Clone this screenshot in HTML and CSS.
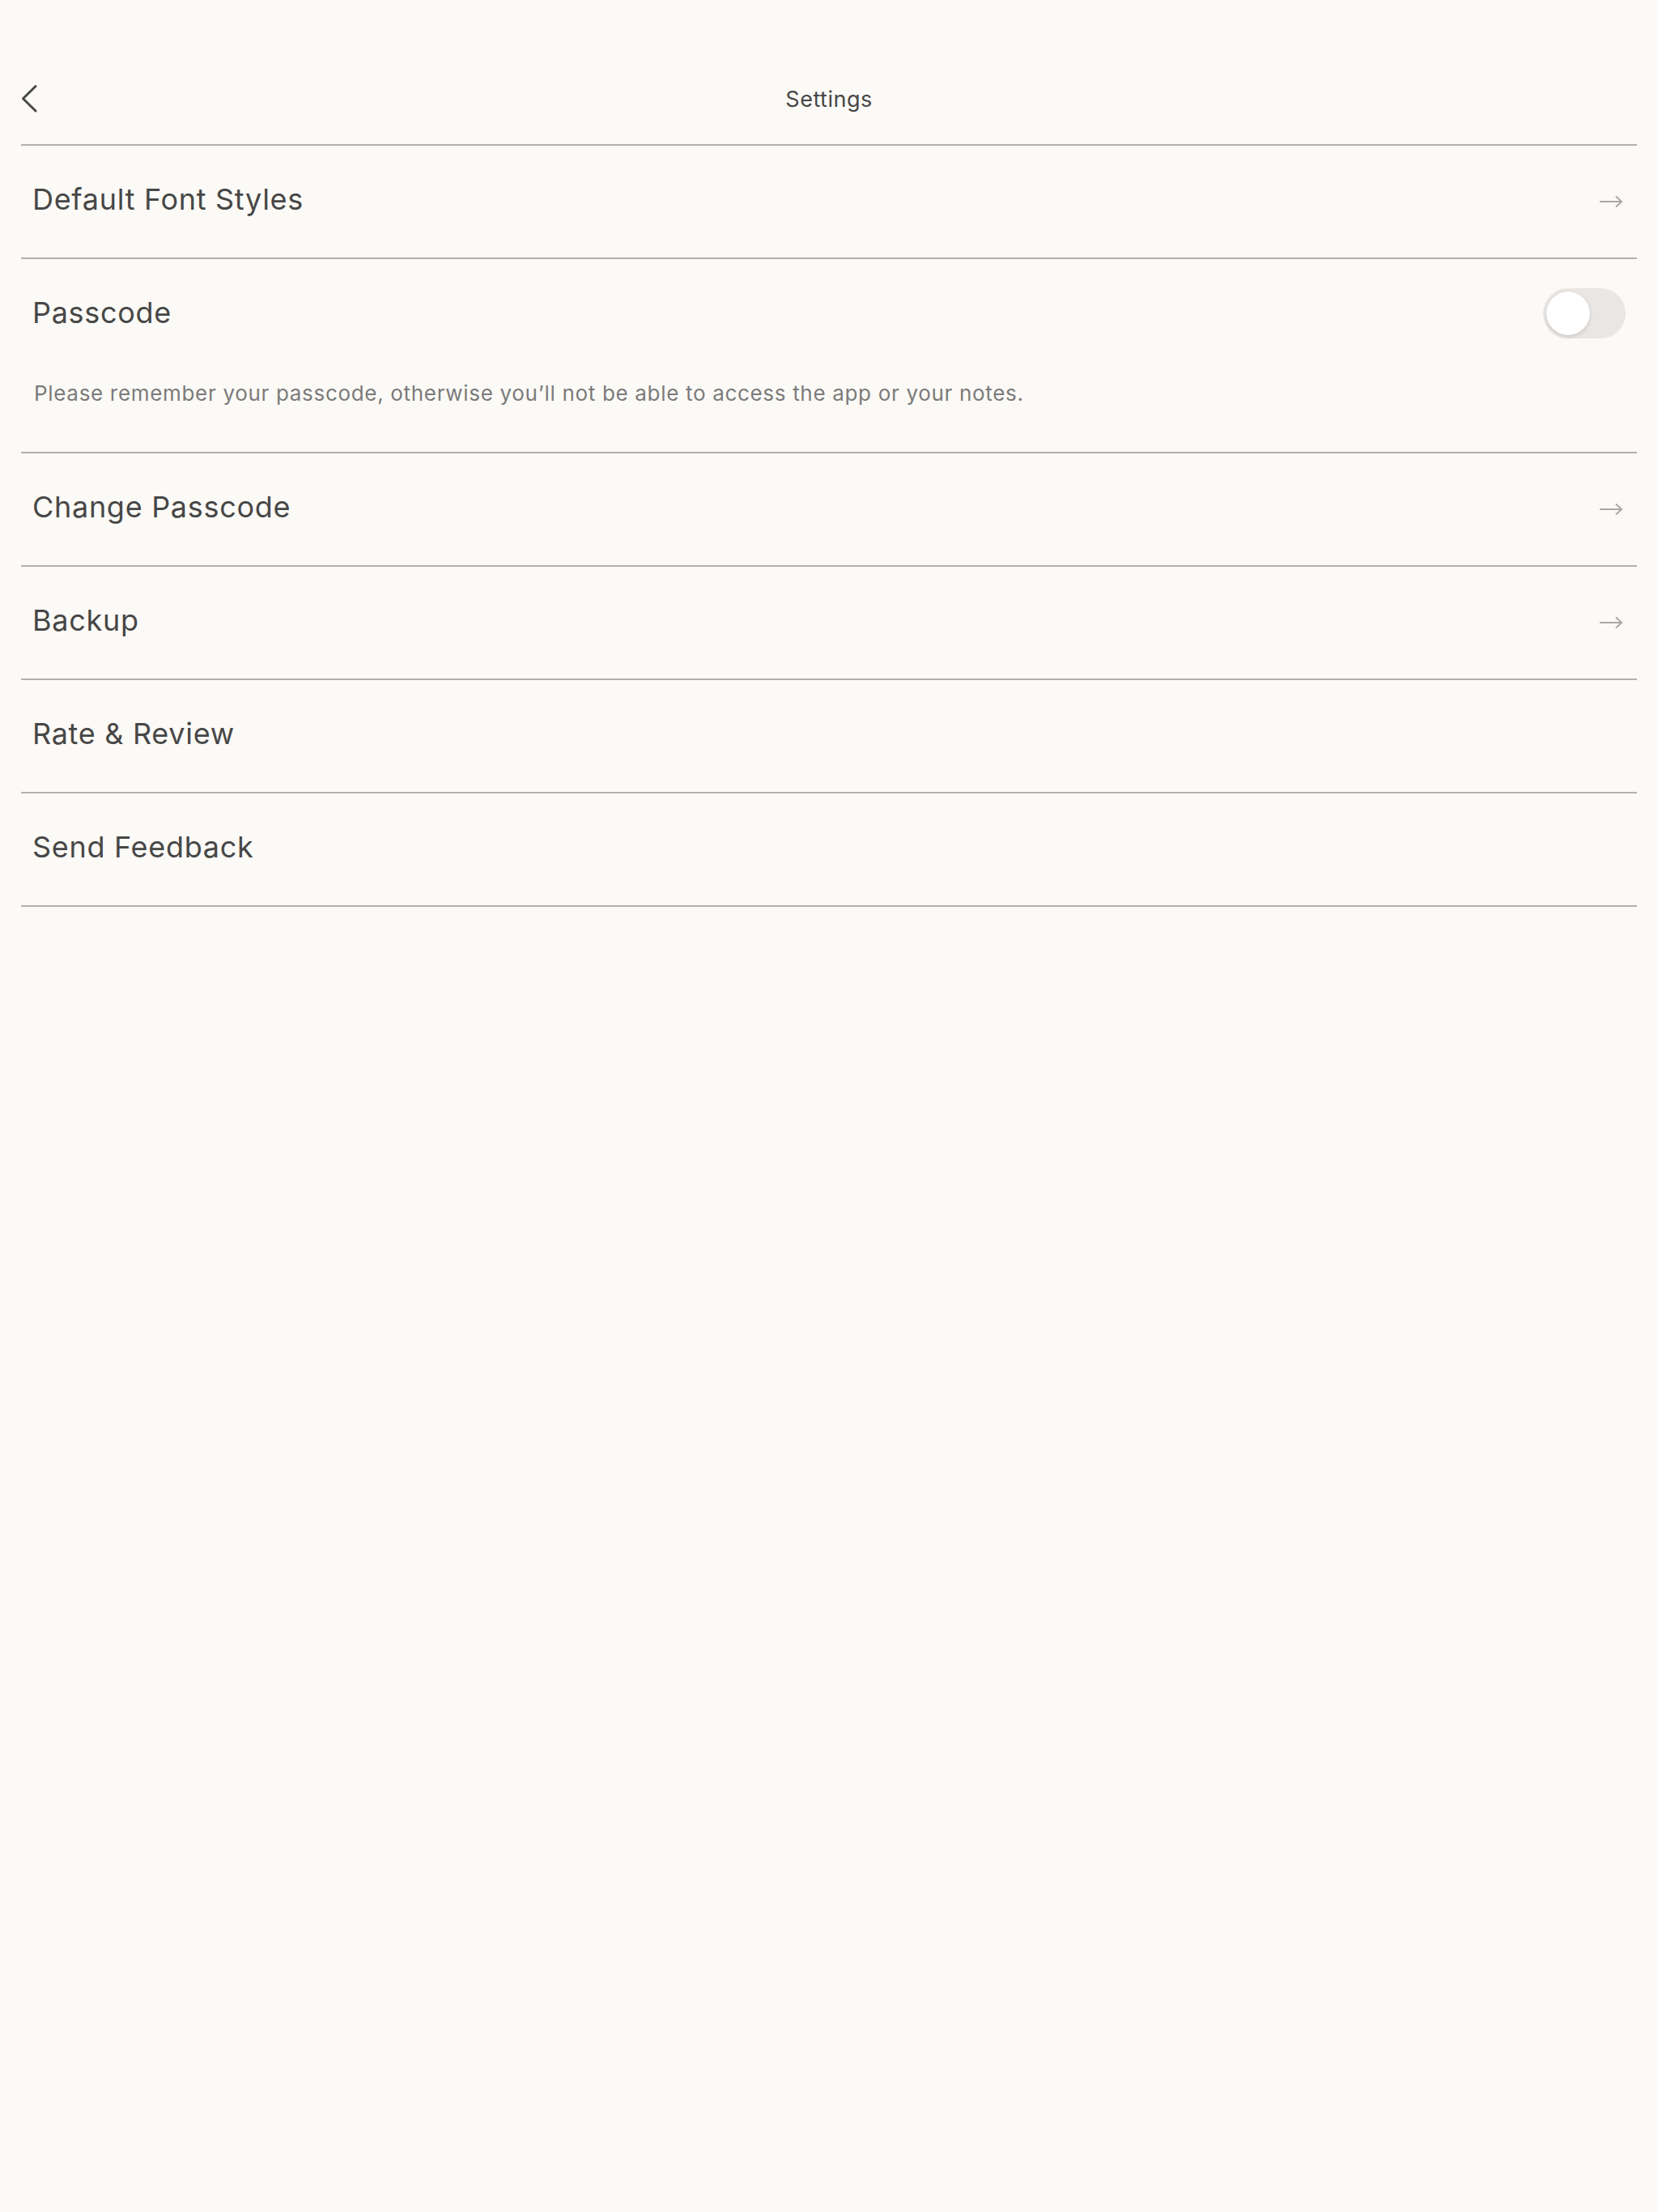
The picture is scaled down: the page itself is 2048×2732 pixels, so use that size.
FILE: index.html
```html
<!DOCTYPE html>
<html lang="en">
<head>
<meta charset="utf-8">
<title>Settings</title>
<link rel="stylesheet" href="styles.css">
</head>
<body>
<div class="page">
  <header class="nav">
    <div class="nav-left">
      <svg class="back" width="24" height="40" viewBox="0 0 24 40" aria-hidden="true">
        <polyline points="18,4.5 2.5,19.75 18,35" fill="none" stroke="#474747" stroke-width="3" stroke-linecap="round" stroke-linejoin="round"/>
      </svg>
    </div>
    <div class="nav-title">Settings</div>
    <div class="nav-right"></div>
  </header>

  <ul class="list">
    <li class="row">
      <span class="label">Default Font Styles</span>
      <svg class="arrow" width="30" height="16" viewBox="0 0 30 16" aria-hidden="true">
        <line x1="1" y1="8" x2="28" y2="8" stroke="#aaa8a5" stroke-width="2"/>
        <polyline points="21,1.5 28,8 21,14.5" fill="none" stroke="#aaa8a5" stroke-width="2"/>
      </svg>
    </li>
    <li class="passcode">
      <div class="pass-head">
        <span class="label">Passcode</span>
        <span class="toggle"><span class="knob"></span></span>
      </div>
      <p class="help">Please remember your passcode, otherwise you’ll not be able to access the app or your notes.</p>
    </li>
    <li class="row">
      <span class="label">Change Passcode</span>
      <svg class="arrow" width="30" height="16" viewBox="0 0 30 16" aria-hidden="true">
        <line x1="1" y1="8" x2="28" y2="8" stroke="#aaa8a5" stroke-width="2"/>
        <polyline points="21,1.5 28,8 21,14.5" fill="none" stroke="#aaa8a5" stroke-width="2"/>
      </svg>
    </li>
    <li class="row">
      <span class="label">Backup</span>
      <svg class="arrow" width="30" height="16" viewBox="0 0 30 16" aria-hidden="true">
        <line x1="1" y1="8" x2="28" y2="8" stroke="#aaa8a5" stroke-width="2"/>
        <polyline points="21,1.5 28,8 21,14.5" fill="none" stroke="#aaa8a5" stroke-width="2"/>
      </svg>
    </li>
    <li class="row">
      <span class="label">Rate &amp; Review</span>
    </li>
    <li class="row">
      <span class="label">Send Feedback</span>
    </li>
  </ul>
</div>
</body>
</html>
```
FILE: styles.css
```css
html, body {
  margin: 0;
  padding: 0;
  background: #fcfaf6;
}
body {
  font-family: "Inter", "Noto Sans", sans-serif;
  color: #474747;
  min-height: 2732px;
}
.page {
  padding: 66px 26px 0 26px;
}
.nav {
  height: 112px;
  display: grid;
  grid-template-columns: 1fr auto 1fr;
  align-items: center;
  border-bottom: 2px solid #b2b0ac;
}
.nav-left {
  display: flex;
  align-items: center;
}
.back {
  display: block;
}
.nav-title {
  font-size: 27px;
  letter-spacing: 0.5px;
  color: #474747;
}
.list {
  list-style: none;
  margin: 0;
  padding: 0;
}
.row {
  display: flex;
  align-items: center;
  justify-content: space-between;
  padding: 0 17px 0 14px;
  box-sizing: border-box;
  height: 140px;
  border-bottom: 2px solid #b2b0ac;
}
.label {
  font-size: 36px;
  letter-spacing: 0.7px;
  color: #474747;
  padding-bottom: 6px;
}
.arrow {
  display: block;
}
.passcode {
  border-bottom: 2px solid #b2b0ac;
  padding: 0 14px 54px 14px;
}
.pass-head {
  height: 132px;
  display: flex;
  align-items: center;
  justify-content: space-between;
}
.pass-head .label {
  padding-bottom: 0;
}
.toggle {
  width: 102px;
  height: 62px;
  border-radius: 31px;
  background: #e9e6e3;
  display: flex;
  align-items: center;
  padding: 0 4px;
  box-sizing: border-box;
  margin-top: 2px;
}
.knob {
  width: 54px;
  height: 54px;
  border-radius: 50%;
  background: #ffffff;
  box-shadow: 0 2px 5px rgba(0, 0, 0, 0.12), 0 0 1px rgba(0, 0, 0, 0.15);
}
.help {
  margin: 16px 0 0 2px;
  font-size: 26px;
  line-height: 36px;
  letter-spacing: 0.68px;
  color: #7b7b7b;
}
```
